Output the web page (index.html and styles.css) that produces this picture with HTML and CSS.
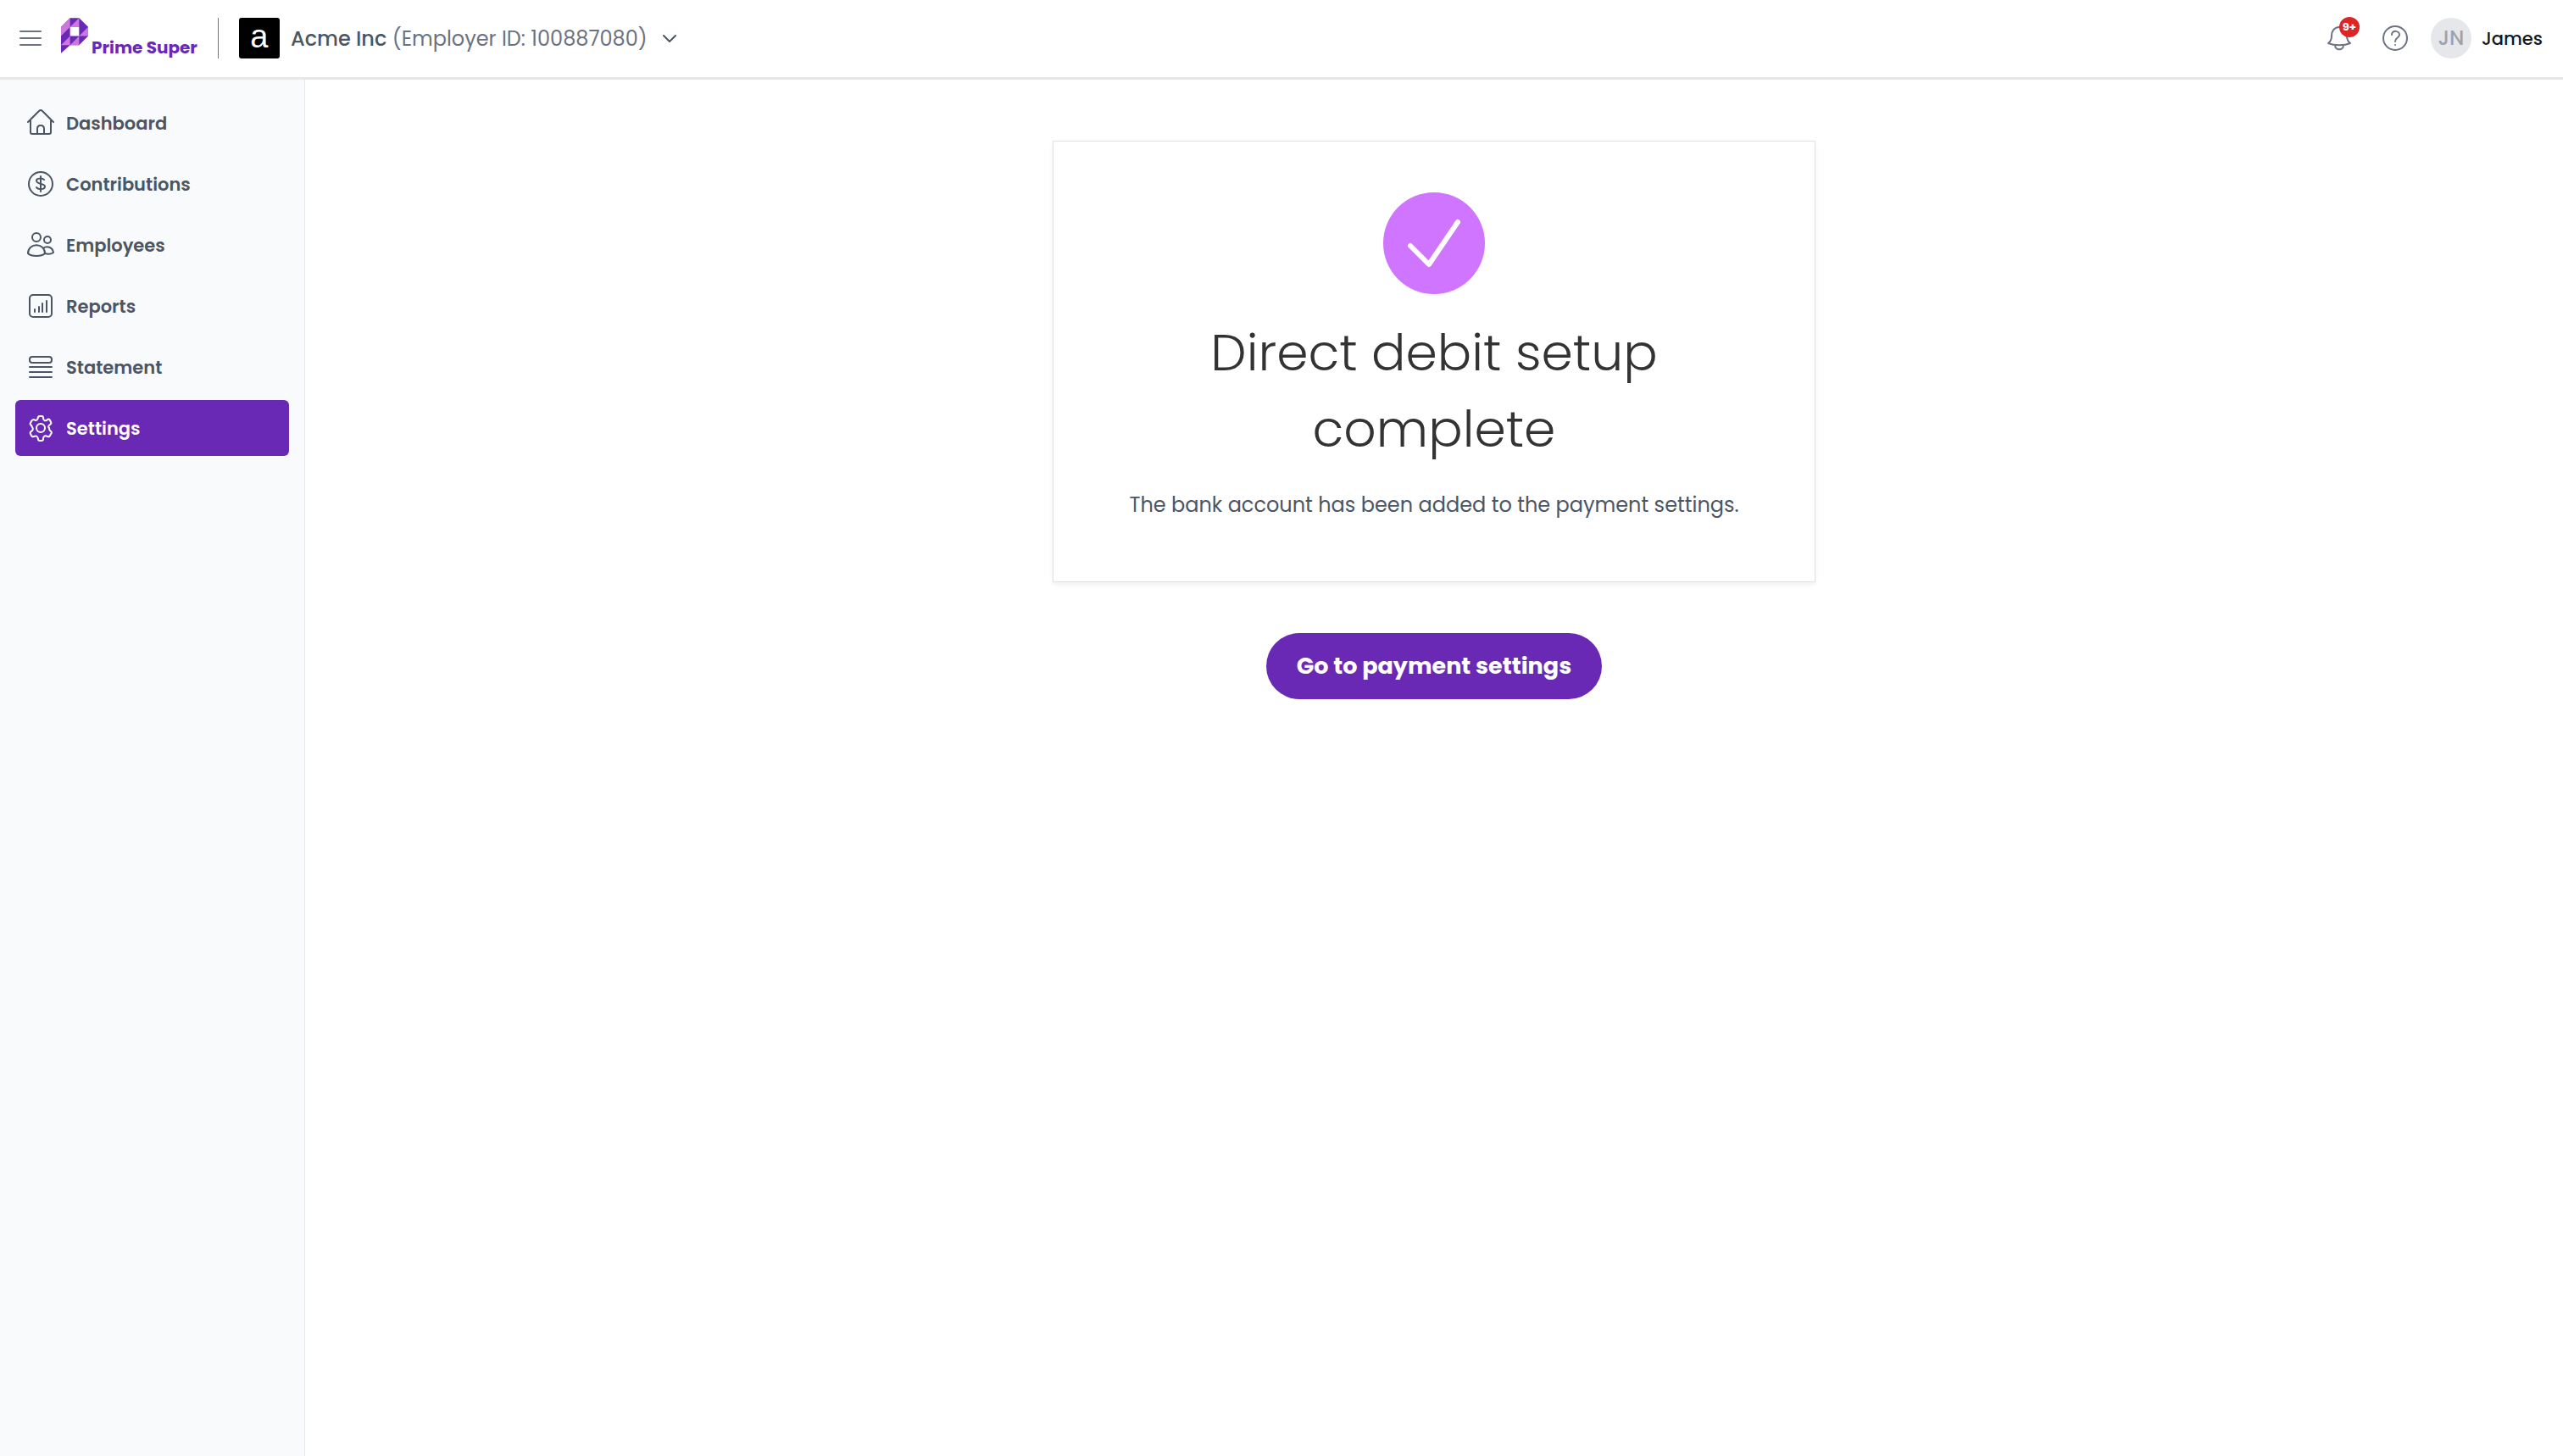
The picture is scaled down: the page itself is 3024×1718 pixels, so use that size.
FILE: index.html
```html
<!DOCTYPE html>
<html lang="en">
<head>
  <meta charset="UTF-8" />
  <meta name="viewport" content="width=device-width, initial-scale=1" />
  <title>Prime Super - Direct debit setup</title>
  <link rel="stylesheet" href="styles.css">
</head>
<body>
  <header class="topbar">
    <button class="icon-button menu-button" aria-label="Toggle menu">
      <svg width="28" height="24" viewBox="0 0 28 24"><path d="M2 4h24M2 12h24M2 20h24" /></svg>
    </button>
    <a href="#" class="logo">
      <svg width="32" height="42" viewBox="0 0 33 43">
        <path fill="#6929b5" d="M11 0h11l11 11v11L22 33H11L0 43V11z" />
        <path fill="#cd76e2" d="M0 11 11 0v11zM11 11 22 0v11zM0 22V11h11zM33 11v11H22zM0 33 11 22v11zM11 33l11-11v11z" />
        <path fill="#fff" d="M11 11h11v11H11z" />
      </svg>
      <span>Prime Super</span>
    </a>
    <div class="divider"></div>
    <button class="employer">
      <span class="employer-logo">a</span>
      <span class="employer-name"><b>Acme Inc</b> (Employer ID: 100887080)</span>
      <svg width="18" height="18" viewBox="0 0 18 18"><path d="m2 6 7 7 7-7" /></svg>
    </button>
    <div class="topbar-right">
      <button class="icon-button bell" aria-label="Notifications">
        <svg width="30" height="32" viewBox="0 0 30 32">
          <path d="M15 3C9 3 6 8 6 13c0 5-1 7-4 9 7 3 19 3 26 0-3-2-4-4-4-9 0-5-3-10-9-10zM10 24c0 7 10 7 10 0" />
        </svg>
        <span class="badge">9+</span>
      </button>
      <button class="icon-button" aria-label="Help">
        <svg width="30" height="30" viewBox="0 0 30 30">
          <circle cx="15" cy="15" r="14" />
          <path d="M11 11c0-6 9-5 9 0 0 4-5 3-5 8M15 23v0" />
        </svg>
      </button>
      <button class="user">
        <span class="avatar">JN</span>
        <span>James</span>
      </button>
    </div>
  </header>

  <div class="layout">
    <nav class="sidebar">
      <a href="#">
        <svg width="32" height="32" viewBox="0 0 32 32"><path d="M1 15 14 2q2-2 4 0l13 13M4 13v14q0 2 2 2h20q2 0 2-2V13M12 29v-6q0-4 4-4t4 4v6" /></svg>
        Dashboard
      </a>
      <a href="#">
        <svg width="32" height="32" viewBox="0 0 32 32"><circle cx="16" cy="16" r="14" /><path d="M16 7v18M20 11c-2-2-9-2-9 1 0 5 10 3 10 7 0 4-8 4-10 1" /></svg>
        Contributions
      </a>
      <a href="#">
        <svg width="32" height="32" viewBox="0 0 32 32"><circle cx="11" cy="7" r="5" /><circle cx="24" cy="10" r="4" /><path d="M1 26c0-13 20-13 20 0-4 4-16 4-20 0zM19 20c4-3 11-2 12 5-3 2-7 2-10 1" /></svg>
        Employees
      </a>
      <a href="#">
        <svg width="32" height="32" viewBox="0 0 32 32"><rect x="3" y="3" width="26" height="26" rx="4" /><path d="M9 20v3M14 17v6M18 13v10M23 10v13" /></svg>
        Reports
      </a>
      <a href="#">
        <svg width="32" height="32" viewBox="0 0 32 32"><rect x="3" y="4" width="26" height="7" rx="3" /><path d="M3 16h26M3 22h26M3 28h26" /></svg>
        Statement
      </a>
      <a href="#" class="active">
        <svg width="32" height="32" viewBox="0 0 32 32">
          <circle cx="16" cy="16" r="5" />
          <path d="M13 4q0-2 2-2h2q2 0 2 2v1q1 3 4 2l1-1q2-1 3 1l1 2q1 2-1 3-3 2-1 4 0 2 1 3 3 2 1 4l-1 2q-1 2-3 1-4-2-5 2v1q0 2-2 2h-2q-2 0-2-2-1-5-5-3-2 1-3-1l-1-2q-1-2 1-3 3-2 1-5l-1-2q-2-1-1-3l1-2q1-2 3-2 4 3 5-3z" />
        </svg>
        Settings
      </a>
    </nav>

    <main class="content">
      <section class="card">
        <svg class="tick" width="120" height="120" viewBox="0 0 120 120">
          <circle cx="60" cy="60" r="60" />
          <path d="m32 63 22 22 34-50" />
        </svg>
        <h1>Direct debit setup complete</h1>
        <p>The bank account has been added to the payment settings.</p>
      </section>
      <button class="primary">Go to payment settings</button>
    </main>
  </div>
</body>
</html>
```
FILE: styles.css
```css
* { box-sizing: border-box; }
body {
  display: flex;
  flex-direction: column;
  min-height: 100vh;
  margin: 0;
  font-family: Poppins, Inter, sans-serif;
  font-size: 24px;
  color: #4b5563;
  background-color: #fff;
}
button {
  padding: 0;
  border: none;
  background: none;
  font: inherit;
  color: inherit;
  cursor: pointer;
}
a { color: inherit; text-decoration: none; }
svg {
  flex: none;
  display: block;
  fill: none;
  stroke: currentColor;
  stroke-width: 2;
  stroke-linecap: round;
  stroke-linejoin: round;
}

/* top bar */
.topbar {
  display: flex;
  align-items: center;
  height: 94px;
  padding: 0 24px 1px 22px;
  border-bottom: 3px solid #e5e7eb;
}
.icon-button { position: relative; color: #6b7280; }
.logo {
  display: flex;
  align-items: flex-end;
  gap: 4px;
  height: 48px;
  margin-left: 22px;
  font-size: 20px;
  font-weight: 700;
  line-height: 26px;
  color: #6929b5;
}
.logo svg { align-self: flex-start; stroke: none; }
.divider {
  width: 1px;
  height: 48px;
  margin: 0 24px;
  background-color: #6b7280;
}
.employer { display: flex; align-items: center; color: #4b5563; }
.employer-logo {
  width: 48px;
  height: 48px;
  margin-right: 13px;
  border-radius: 3px;
  font-family: "Liberation Sans", sans-serif;
  font-size: 38px;
  line-height: 44px;
  color: #fff;
  background-color: #000;
}
.employer-name { margin-right: 17px; color: #6b7280; }
.employer-name b { font-weight: 500; color: #4b5563; }
.topbar-right {
  display: flex;
  align-items: center;
  gap: 27px;
  margin-left: auto;
}
.bell { margin-right: 9px; }
.badge {
  position: absolute;
  top: -9px;
  right: -9px;
  width: 24px;
  height: 24px;
  border-radius: 50%;
  font-size: 13px;
  font-weight: 700;
  line-height: 24px;
  color: #fff;
  background-color: #dc2626;
}
.user {
  display: flex;
  align-items: center;
  gap: 12px;
  font-size: 21px;
  font-weight: 500;
  color: #111827;
}
.avatar {
  width: 48px;
  height: 48px;
  border-radius: 50%;
  font-size: 24px;
  line-height: 48px;
  color: #9ca3af;
  background-color: #e5e7eb;
}

/* sidebar */
.layout { display: flex; flex: 1; }
.sidebar {
  display: flex;
  flex-direction: column;
  gap: 6px;
  width: 360px;
  padding: 18px;
  border-right: 1px solid #e5e7eb;
  background-color: #f9fafc;
}
.sidebar a {
  display: flex;
  align-items: center;
  gap: 14px;
  height: 66px;
  padding: 0 14px;
  border-radius: 6px;
  font-size: 21px;
  font-weight: 600;
}
.sidebar a.active { color: #fff; background-color: #6929b5; }

/* content */
.content {
  display: flex;
  flex: 1;
  flex-direction: column;
  align-items: center;
  gap: 60px;
  padding: 72px 24px;
}
.card {
  display: flex;
  flex-direction: column;
  align-items: center;
  width: 100%;
  max-width: 900px;
  padding: 60px 72px 72px;
  border: 1px solid #e0e0e0;
  text-align: center;
  box-shadow: 0 3px 6px rgba(0, 0, 0, 0.06);
}
.tick { stroke: #fff; stroke-width: 6; }
.tick circle { fill: #cf75ff; stroke: none; }
.card h1 {
  max-width: 600px;
  margin: 24px 0 27px;
  font-size: 60px;
  font-weight: 300;
  line-height: 90px;
  color: #333;
}
.card p { margin: 0; line-height: 36px; }
.primary {
  height: 78px;
  padding: 0 36px;
  border-radius: 39px;
  font-size: 27px;
  font-weight: 700;
  color: #fff;
  background-color: #6929b5;
}
```
